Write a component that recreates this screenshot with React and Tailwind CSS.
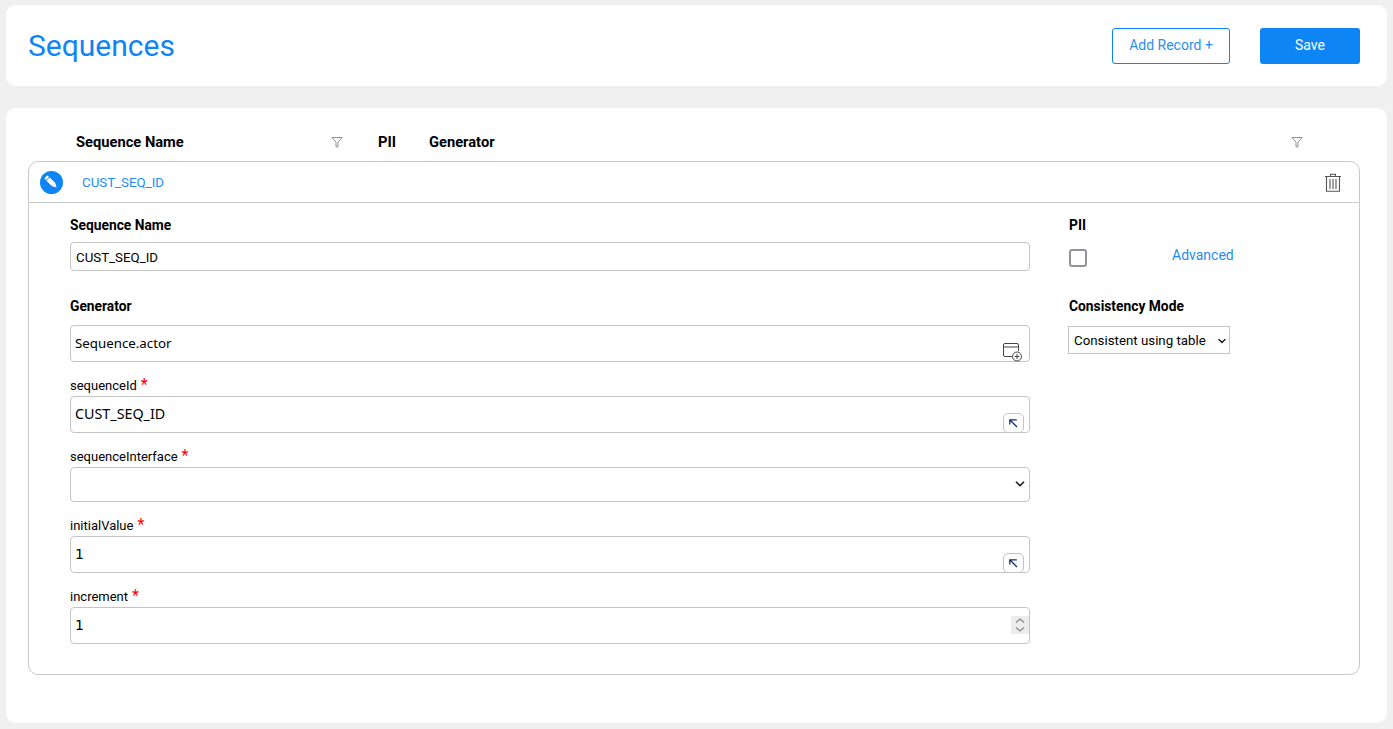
import { ChevronDown } from 'lucide-react'

const FilterIcon = () => (
  <svg width="12" height="12" viewBox="0 0 12 12" fill="none" stroke="#8f8f8f" strokeWidth="1">
    <path d="M1 1.500h10L7 6.200v4.600H5V6.200z" />
  </svg>
)

const TrashIcon = () => (
  <svg width="18" height="19" viewBox="0 0 18 19" fill="none" stroke="#555" strokeWidth="1.100">
    <path d="M1 3.500h16M6.500 3.200V1.200h5v2M2.500 3.500v14.800h13V3.500M6 6v10M9 6v10M12 6v10" />
  </svg>
)

const PencilIcon = () => (
  <svg width="15" height="15" viewBox="0 0 15 15" fill="#fff">
    <g transform="rotate(-45 7.500 7.500)">
      <rect x="5.200" y="-0.500" width="4.600" height="2.400" rx="1" />
      <rect x="5.200" y="2.600" width="4.600" height="8" />
      <path d="M5.200 10.600h4.600l-2.300 4z" />
    </g>
  </svg>
)

const AddWindowIcon = () => (
  <svg width="21" height="20" viewBox="0 0 21 20" fill="none" stroke="#444" strokeWidth="1">
    <path d="M10 14.500H3a1.500 1.500 0 0 1-1.500-1.500V3A1.500 1.500 0 0 1 3 1.500h12A1.500 1.500 0 0 1 16.500 3v6M1.500 5h15" />
    <circle cx="15" cy="14.500" r="4.500" />
    <path d="M15 12v5M12.500 14.500h5" />
  </svg>
)

const ArrowBox = () => (
  <span className="absolute right-[6px] bottom-0 w-[21px] h-[20px] border border-[#c4c4c4] rounded-[5px] bg-white flex items-center justify-center">
    <svg width="9" height="9" viewBox="0 0 9 9" fill="none" stroke="#12306b" strokeWidth="1.300">
      <path d="M8 8 1.500 1.500M0.800 5.500V0.800h7" />
    </svg>
  </span>
)

const StepperIcon = () => (
  <svg width="18" height="18" viewBox="0 0 18 18" fill="none" stroke="#888" strokeWidth="1.300">
    <path d="M5 6.500 9 3l4 3.500M5 11.500 9 15l4-3.500" />
  </svg>
)

const Label = ({ children, required }) => (
  <label className="block text-[13px] leading-[18px] text-black">
    {children}
    {required && <span className="text-[#f00] text-[16px] leading-[16px] ml-1">*</span>}
  </label>
)

const BoldLabel = ({ children }) => (
  <label className="block text-[13.800px] leading-[18px] font-bold text-black">{children}</label>
)

const TextField = ({ value, children, textClass }) => (
  <div className="relative">
    <input
      readOnly
      defaultValue={value}
      className={`w-full h-[37px] border border-[#c4c4c4] rounded-[4px] pl-1 pr-8 pb-[2px] text-black bg-white outline-none ${textClass}`}
    />
    {children}
  </div>
)

const App = () => {
  return (
    <div className="w-[1393px] h-[729px] bg-[#f0f0f0] px-[6px] pt-[5px] overflow-hidden font-['Roboto',sans-serif]">
      {/* Page header */}
      <div className="h-[81px] bg-white rounded-[10px] flex items-center justify-between pl-[22px] pr-[27px]">
        <h1 className="text-[30px] leading-none text-[#0d85f5]">Sequences</h1>
        <div className="flex items-center gap-[30px]">
          <button className="w-[118px] h-[36px] border border-[#0d85f5] rounded-[3px] bg-white text-[14px] text-[#2a8ff0]">
            Add Record +
          </button>
          <button className="w-[100px] h-[36px] rounded-[3px] bg-[#0d85f5] text-[14px] text-white">
            Save
          </button>
        </div>
      </div>

      {/* Sequence list */}
      <div className="mt-[22px] h-[615px] bg-white rounded-[10px] px-[22px]">
        <div className="h-[53px] flex items-center text-[14.700px] font-bold text-black pt-[15px]">
          <span className="w-[48px]" />
          <span className="w-[255px]">Sequence Name</span>
          <FilterIcon />
          <span className="ml-[35px] w-[51px]">PII</span>
          <span className="w-[862px]">Generator</span>
          <FilterIcon />
        </div>

        <div className="w-[1332px] h-[514px] border border-[#c9c9c9] rounded-[10px]">
          <div className="h-[41px] pt-[1px] border-b border-[#c9c9c9] flex items-center pl-[11px] pr-[17px]">
            <span className="w-[23px] h-[23px] -mt-[1px] rounded-full bg-[#0d85f5] flex items-center justify-center">
              <PencilIcon />
            </span>
            <span className="ml-[19px] text-[13.300px] text-[#1f8cf2]">CUST_SEQ_ID</span>
            <span className="ml-auto">
              <TrashIcon />
            </span>
          </div>

          <div className="flex pl-[41px] pt-[13px]">
            {/* Left column */}
            <div className="w-[960px]">
              <BoldLabel>Sequence Name</BoldLabel>
              <input
                readOnly
                defaultValue="CUST_SEQ_ID"
                className="mt-[8px] w-full h-[29px] border border-[#c4c4c4] rounded-[4px] px-[5px] pt-[1px] text-[13.300px] text-black bg-white outline-none"
              />
              <div className="mt-[26px]">
                <BoldLabel>Generator</BoldLabel>
              </div>
              <div className="mt-[10px]">
                <TextField value="Sequence.actor" textClass="font-['Noto_Sans',sans-serif] text-[13.300px]">
                  <span className="absolute right-[7px] bottom-0">
                    <AddWindowIcon />
                  </span>
                </TextField>
              </div>
              <div className="mt-[15px]">
                <Label required>sequenceId</Label>
              </div>
              <div className="mt-[1px]">
                <TextField value="CUST_SEQ_ID" textClass="font-['Noto_Sans',sans-serif] text-[14.300px]">
                  <ArrowBox />
                </TextField>
              </div>
              <div className="mt-[15px]">
                <Label required>sequenceInterface</Label>
              </div>
              <div className="mt-[1px] relative">
                <select className="appearance-none w-full h-[35px] border border-[#c4c4c4] rounded-[4px] bg-white outline-none text-[14px]">
                  <option></option>
                </select>
                <ChevronDown size={14} strokeWidth={3} className="absolute right-[3px] top-[10px] text-[#222] pointer-events-none" />
              </div>
              <div className="mt-[15px]">
                <Label required>initialValue</Label>
              </div>
              <div className="mt-[1px]">
                <TextField value="1" textClass="font-['DejaVu_Sans',sans-serif] text-[14px]">
                  <ArrowBox />
                </TextField>
              </div>
              <div className="mt-[15px]">
                <Label required>increment</Label>
              </div>
              <div className="mt-[1px]">
                <TextField value="1" textClass="font-['DejaVu_Sans',sans-serif] text-[14px]">
                  <span className="absolute right-[1px] top-[9px] w-[18px] h-[18px] bg-[#ececec]">
                    <StepperIcon />
                  </span>
                </TextField>
              </div>
            </div>

            {/* Right column */}
            <div className="ml-[38px] w-[240px]">
              <div className="pl-[1px]">
                <BoldLabel>PII</BoldLabel>
              </div>
              <div className="mt-[15px] flex items-center">
                <span className="ml-[1px] w-[18px] h-[18px] border-2 border-[#92929c] rounded-[3px] bg-white" />
                <a className="ml-[85px] -mt-[5px] text-[14px] text-[#1f8cf2]">Advanced</a>
              </div>
              <div className="mt-[30px] pl-[1px]">
                <BoldLabel>Consistency Mode</BoldLabel>
              </div>
              <div className="relative mt-[11px] w-[162px]">
                <select className="appearance-none w-[162px] h-[28px] border border-[#c4c4c4] bg-white pl-[5px] pt-[1px] text-[13.300px] text-black outline-none">
                  <option>Consistent using table</option>
                </select>
                <ChevronDown size={12} strokeWidth={3} className="absolute right-[2px] top-[9px] text-[#222] pointer-events-none" />
              </div>
            </div>
          </div>
        </div>
      </div>
    </div>
  )
}

export default App
